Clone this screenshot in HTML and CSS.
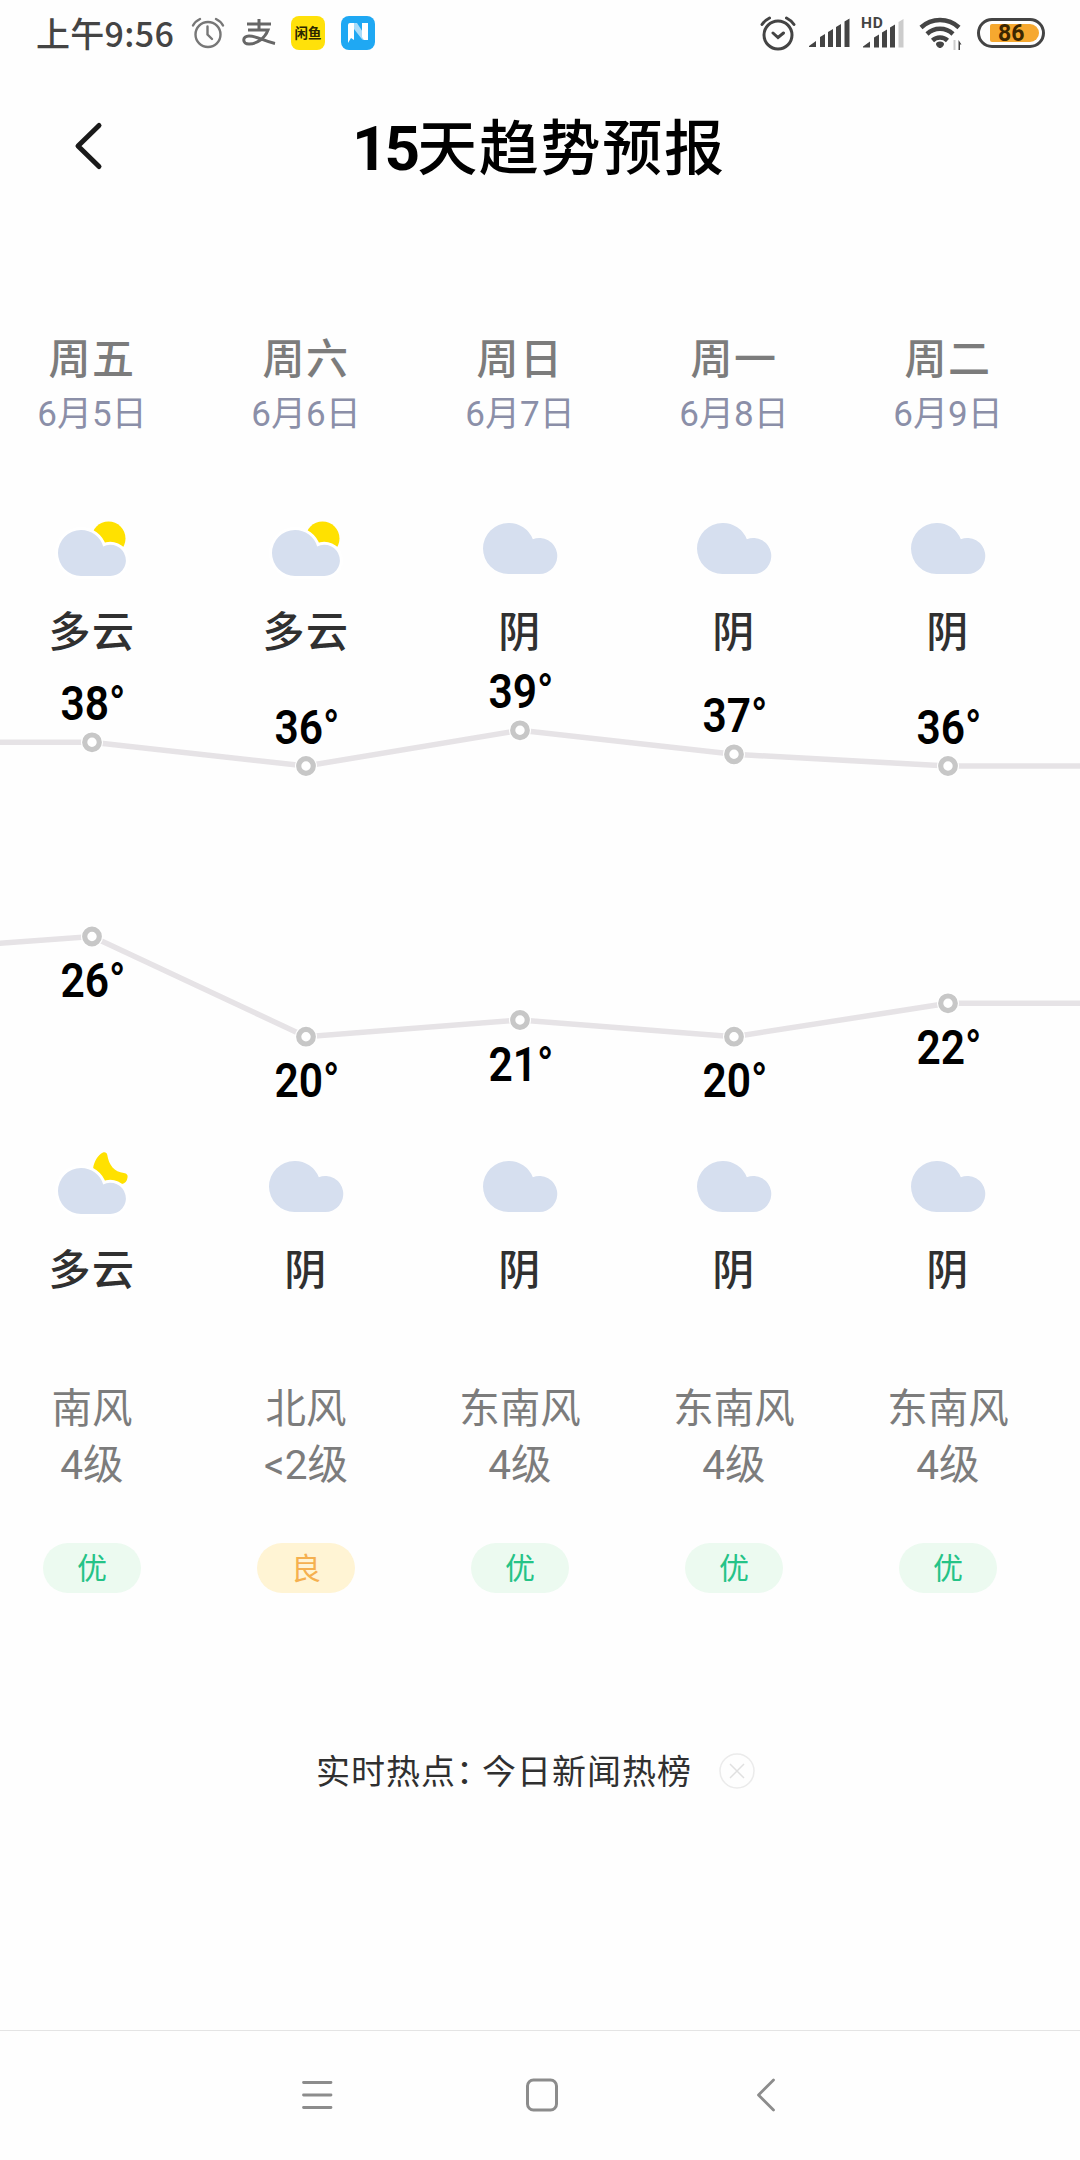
FILE: index.html
```html
<!DOCTYPE html>
<html lang="zh-CN">
<head>
    <meta charset="UTF-8">
    <meta name="viewport" content="width=device-width, initial-scale=1.0">
    <title>15天趋势预报</title>
    <link rel="stylesheet" href="styles.css">
</head>
<body>

    <!-- Shared weather icons -->
    <svg class="symbols" width="0" height="0">
        <symbol id="cloud" viewBox="0 0 80 80">
            <path fill="#d6dfef" d="M28.5 13a25.5 25.5 0 0 1 24.3 16.2A18 18 0 1 1 59 64H28.5a25.5 25.5 0 0 1 0-51z"/>
        </symbol>
        <symbol id="cloudy-day" viewBox="0 0 80 80">
            <circle cx="56.5" cy="28.5" r="17" fill="#ffe100"/>
            <path fill="#d6dfef" stroke="#fff" stroke-width="6" paint-order="stroke" d="M29 20a23 23 0 0 1 22.2 16.5A15.6 15.6 0 1 1 58 66H29a23 23 0 0 1 0-46z"/>
        </symbol>
        <symbol id="cloudy-night" viewBox="0 0 80 80">
            <path fill="#ffe100" d="M41 21c1-8 5-14 10-16.500 2-.8 4 .2 4.300 2.500 1.500 10 7 17 16.500 18 3 .2 4.500 2.500 3.600 5C75 33 73 35.500 70 36L52 40z"/>
            <path fill="#d6dfef" stroke="#fff" stroke-width="6" paint-order="stroke" d="M29 20a23 23 0 0 1 22.200 16.500A15.600 15.600 0 1 1 58 66H29a23 23 0 0 1 0-46z"/>
        </symbol>
    </svg>

    <div class="status-bar">
        <div class="status-left">
            <span class="time">上午9:56</span>
            <svg class="ic-clock" width="34" height="34" viewBox="0 0 34 34" fill="none" stroke="#777" stroke-width="2.400" stroke-linecap="round">
                <circle cx="17" cy="18.500" r="12.500"/>
                <path d="M16.500 10.500v8l4.500 4.500M2 9.500c1.500-3 4-5 7-6.500M32 9.500c-1.500-3-4-5-7-6.500"/>
            </svg>
            <svg class="ic-pay" width="34" height="28" viewBox="0 0 34 28" fill="none" stroke="#666" stroke-width="3">
                <path d="M5 5h24M17 0v11M6 11h20C23 19 15 25 7 25c-7 0-7-8 0-8 8 0 14 5 26 7.500"/>
            </svg>
            <span class="app-yellow">闲鱼</span>
            <svg class="ic-n" width="34" height="34" viewBox="0 0 34 34">
                <rect width="34" height="34" rx="8" fill="#1fa8f3"/>
                <path d="M7 9q0-2 2-2h4v17l-3-2-3 5z" fill="#fff"/>
                <path d="M13 7h3l11 17h-4q-2 0-3-2l-7-9z" fill="#a9dcfa"/>
                <path d="M21 7h6v17h-4l-2-3z" fill="#fff"/>
            </svg>
        </div>
        <div class="status-right">
            <svg class="ic-alarm" width="36" height="36" viewBox="0 0 36 36" fill="none" stroke="#444" stroke-width="3" stroke-linecap="round">
                <circle cx="18" cy="20" r="14"/>
                <path d="M13 18l5 4.500 5.500-4.500M2 9.500C4 6.500 6.500 4.500 9.500 3M34 9.500C32 6.500 29.500 4.500 26.500 3"/>
            </svg>
            <svg class="ic-signal" width="41" height="30" viewBox="0 0 41 30" fill="#444">
                <path d="M0 29v-1l7-5v6zM11 29V19l5-3v13zM19 29V14l5-3v18zM27 29V9l5-3v23zM35.500 29V3.500l5-3V29z"/>
            </svg>
            <svg class="ic-hd" width="41" height="34" viewBox="0 0 41 34" fill="#444">
                <text x="-2" y="12" font-size="15.500" font-weight="700" letter-spacing="0.800">HD</text>
                <path d="M0 31.500v-1l7-5v6zM11 31.500V21.500l5-3v13zM19 31.500V16.500l5-3v18zM27 31.500V11.500l5-3v23z"/>
                <path fill="#ccc" d="M35.500 31.500V6l5-3v28.500z"/>
            </svg>
            <svg class="ic-wifi" width="44" height="36" viewBox="0 0 44 36" fill="none" stroke="#444" stroke-width="4.500">
                <path d="M2 12.500a28 28 0 0 1 38 0M8 19a19 19 0 0 1 26 0M13.500 25.500a11 11 0 0 1 15 0"/>
                <path d="M21 26.500c2.500 0 4 1 4 2.500s-2 4-4 4-4-2.500-4-4 1.500-2.500 4-2.500z" fill="#444" stroke="none"/>
                <path d="M35.500 25v10" stroke="#ccc" stroke-width="2"/>
                <path d="M39.500 35V25l3 4.500h-1.500v5.500z" fill="#444" stroke="none"/>
            </svg>
            <div class="battery"><span class="battery-fill">86</span></div>
        </div>
    </div>

    <div class="header">
        <svg class="back" width="30" height="50" viewBox="0 0 30 50" fill="none" stroke="#1a1a1a" stroke-width="5" stroke-linecap="round" stroke-linejoin="round">
            <path d="M26 4.500L5 25l21 20.500"/>
        </svg>
        <h1><span class="num">15</span>天趋势预报</h1>
    </div>

    <div class="forecast">
        <div class="row">
            <div class="day"><p class="week">周五</p><p class="date">6月5日</p></div>
            <div class="day"><p class="week">周六</p><p class="date">6月6日</p></div>
            <div class="day"><p class="week">周日</p><p class="date">6月7日</p></div>
            <div class="day"><p class="week">周一</p><p class="date">6月8日</p></div>
            <div class="day"><p class="week">周二</p><p class="date">6月9日</p></div>
        </div>

        <div class="row weather-row">
            <div class="day"><svg class="icon"><use href="#cloudy-day"/></svg><p class="weather">多云</p></div>
            <div class="day"><svg class="icon"><use href="#cloudy-day"/></svg><p class="weather">多云</p></div>
            <div class="day"><svg class="icon"><use href="#cloud"/></svg><p class="weather">阴</p></div>
            <div class="day"><svg class="icon"><use href="#cloud"/></svg><p class="weather">阴</p></div>
            <div class="day"><svg class="icon"><use href="#cloud"/></svg><p class="weather">阴</p></div>
        </div>

        <svg class="chart" width="1080" height="485" viewBox="0 663 1080 485">
            <polyline class="line" points="-10,742.300 92,742.300 306,766 520,730.300 734,754.300 948,766 1090,766"/>
            <polyline class="line" points="-10,944 92,936.500 306,1036.700 520,1020 734,1036.700 948,1003.300 1090,1003.300"/>
            <g class="dots">
                <circle cx="92" cy="742.300" r="11"/><circle class="ring" cx="92" cy="742.300" r="7.300"/>
                <circle cx="306" cy="766" r="11"/><circle class="ring" cx="306" cy="766" r="7.300"/>
                <circle cx="520" cy="730.300" r="11"/><circle class="ring" cx="520" cy="730.300" r="7.300"/>
                <circle cx="734" cy="754.300" r="11"/><circle class="ring" cx="734" cy="754.300" r="7.300"/>
                <circle cx="948" cy="766" r="11"/><circle class="ring" cx="948" cy="766" r="7.300"/>
                <circle cx="92" cy="936.500" r="11"/><circle class="ring" cx="92" cy="936.500" r="7.300"/>
                <circle cx="306" cy="1036.700" r="11"/><circle class="ring" cx="306" cy="1036.700" r="7.300"/>
                <circle cx="520" cy="1020" r="11"/><circle class="ring" cx="520" cy="1020" r="7.300"/>
                <circle cx="734" cy="1036.700" r="11"/><circle class="ring" cx="734" cy="1036.700" r="7.300"/>
                <circle cx="948" cy="1003.300" r="11"/><circle class="ring" cx="948" cy="1003.300" r="7.300"/>
            </g>
            <g class="temps">
                <text x="93" y="720" textLength="65" lengthAdjust="spacingAndGlyphs">38°</text>
                <text x="307" y="744" textLength="65" lengthAdjust="spacingAndGlyphs">36°</text>
                <text x="521" y="708" textLength="65" lengthAdjust="spacingAndGlyphs">39°</text>
                <text x="735" y="732" textLength="65" lengthAdjust="spacingAndGlyphs">37°</text>
                <text x="949" y="744" textLength="65" lengthAdjust="spacingAndGlyphs">36°</text>
                <text x="93" y="997" textLength="65" lengthAdjust="spacingAndGlyphs">26°</text>
                <text x="307" y="1097" textLength="65" lengthAdjust="spacingAndGlyphs">20°</text>
                <text x="521" y="1080.500" textLength="65" lengthAdjust="spacingAndGlyphs">21°</text>
                <text x="735" y="1097" textLength="65" lengthAdjust="spacingAndGlyphs">20°</text>
                <text x="949" y="1064" textLength="65" lengthAdjust="spacingAndGlyphs">22°</text>
            </g>
        </svg>

        <div class="row">
            <div class="day"><svg class="icon"><use href="#cloudy-night"/></svg><p class="weather">多云</p></div>
            <div class="day"><svg class="icon"><use href="#cloud"/></svg><p class="weather">阴</p></div>
            <div class="day"><svg class="icon"><use href="#cloud"/></svg><p class="weather">阴</p></div>
            <div class="day"><svg class="icon"><use href="#cloud"/></svg><p class="weather">阴</p></div>
            <div class="day"><svg class="icon"><use href="#cloud"/></svg><p class="weather">阴</p></div>
        </div>

        <div class="row wind-row">
            <div class="day"><p class="wind">南风<br>4级</p><span class="air good">优</span></div>
            <div class="day"><p class="wind">北风<br>&lt;2级</p><span class="air fair">良</span></div>
            <div class="day"><p class="wind">东南风<br>4级</p><span class="air good">优</span></div>
            <div class="day"><p class="wind">东南风<br>4级</p><span class="air good">优</span></div>
            <div class="day"><p class="wind">东南风<br>4级</p><span class="air good">优</span></div>
        </div>
    </div>

    <div class="hot-news">
        <p>实时热点<span class="colon">：</span>今日新闻热榜</p>
        <svg width="36" height="36" viewBox="0 0 36 36" fill="none" stroke="#ebebeb" stroke-width="1.500">
            <circle cx="18" cy="18" r="17"/>
            <path d="M11 11l14 14M25 11L11 25" stroke="#e0e0e0"/>
        </svg>
    </div>

    <div class="nav-bar">
        <svg width="34" height="34" viewBox="0 0 34 34" fill="none" stroke="#8c8c8c" stroke-width="2.800" stroke-linecap="round">
            <path d="M3.500 4.500h27.500M3.500 17h27.500M3.500 29.500h27.500"/>
        </svg>
        <svg width="34" height="34" viewBox="0 0 34 34" fill="none" stroke="#8c8c8c" stroke-width="3">
            <rect x="2.500" y="2" width="29" height="30" rx="6"/>
        </svg>
        <svg width="34" height="34" viewBox="0 0 34 34" fill="none" stroke="#8c8c8c" stroke-width="2.800" stroke-linecap="round" stroke-linejoin="round">
            <path d="M24.500 2L9.500 17l15 15"/>
        </svg>
    </div>

</body>
</html>
```

FILE: styles.css
```css
body {
    margin: 0;
    width: 1080px;
    height: 2160px;
    display: flex;
    flex-direction: column;
    overflow: hidden;
    background-color: #fefefe;
    color: #303030;
    font-family: Roboto, "Noto Sans CJK SC", sans-serif;
}

h1,
p {
    margin: 0;
}

.symbols {
    position: absolute;
}

/* Status bar */
.status-bar {
    display: flex;
    justify-content: space-between;
    align-items: center;
    height: 66px;
    padding: 0 35px 0 36px;
    box-sizing: border-box;
    color: #444;
}

.status-left,
.status-right {
    display: flex;
    align-items: center;
}

.time {
    font-family: "Noto Sans CJK SC", sans-serif;
    font-size: 34px;
    font-weight: 500;
    letter-spacing: 0.3px;
    line-height: 66px;
}

.ic-clock {
    margin-left: 17px;
}

.ic-pay {
    margin-left: 17px;
}

.app-yellow {
    width: 34px;
    height: 34px;
    margin-left: 15px;
    border-radius: 8px;
    background-color: #ffe10a;
    color: #2b2600;
    font-size: 13.5px;
    font-weight: 700;
    line-height: 34px;
    text-align: center;
    white-space: nowrap;
}

.ic-n {
    margin-left: 16px;
}

.ic-alarm {
    margin-right: 1px;
}

.ic-signal {
    margin-left: 12px;
}

.ic-hd {
    margin-left: 13px;
    overflow: visible;
}

.ic-wifi {
    margin-left: 15px;
}

.battery {
    width: 68px;
    height: 30px;
    margin-left: 14px;
    padding: 3px 3px 3px 10px;
    box-sizing: border-box;
    border: 3px solid #444;
    border-radius: 15px;
}

.battery-fill {
    display: block;
    height: 18px;
    border-radius: 2px 9px 9px 2px;
    background-color: #f6a82f;
    color: #3d2600;
    font-size: 23px;
    font-weight: 700;
    line-height: 19px;
    padding-left: 8px;
}

/* Title */
.header {
    display: flex;
    align-items: center;
    height: 160px;
    padding-left: 73px;
}

.header h1 {
    margin-left: 249px;
    color: #000;
    font-family: "Noto Sans CJK SC", sans-serif;
    font-size: 60px;
    font-weight: 500;
    letter-spacing: 1.7px;
    line-height: 80px;
}

.header .num {
    font-family: Roboto, sans-serif;
    font-size: 62px;
    font-weight: 700;
    letter-spacing: -3px;
}

/* Forecast */
.forecast {
    padding-top: 104px;
}

.row {
    display: grid;
    grid-template-columns: repeat(5, 214px);
    margin-left: -15px;
}

.day {
    display: flex;
    flex-direction: column;
    align-items: center;
    text-align: center;
}

.week {
    color: #7c7c7c;
    font-size: 42px;
    font-weight: 500;
    letter-spacing: 1.5px;
    line-height: 60px;
}

.date {
    color: #8b8fa8;
    font-size: 35px;
    line-height: 50px;
}

.weather-row {
    margin-top: 70px;
}

.icon {
    width: 80px;
    height: 80px;
}

.weather {
    margin-top: 13px;
    font-size: 42px;
    font-weight: 500;
    letter-spacing: 1.5px;
    line-height: 60px;
}

.chart {
    display: block;
    overflow: visible;
}

.line {
    fill: none;
    stroke: #e6e3e6;
    stroke-width: 5.5;
}

.dots circle {
    fill: #fff;
}

.dots .ring {
    stroke: #c7c7c7;
    stroke-width: 5.2;
}

.temps {
    fill: #000;
    font-size: 48px;
    font-weight: 600;
    text-anchor: middle;
}

.wind-row {
    margin-top: 80px;
}

.wind {
    color: #7c7c7c;
    font-size: 40.5px;
    line-height: 56px;
}

.air {
    width: 98px;
    height: 50px;
    margin-top: 50px;
    border-radius: 25px;
    font-size: 30px;
    line-height: 52px;
}

.good {
    background-color: #ecfaf0;
    color: #25c387;
}

.fair {
    background-color: #fff4d4;
    color: #f5b04f;
}

/* Hot news */
.hot-news {
    display: flex;
    align-items: center;
    margin: 152px 0 0 316px;
}

.hot-news p {
    width: 403px;
    font-size: 34px;
    letter-spacing: 1px;
    line-height: 50px;
    padding-top: 4px;
    margin-top: -2px;
}

.colon {
    letter-spacing: -8px;
}

/* System navigation */
.nav-bar {
    display: flex;
    align-items: center;
    justify-content: space-between;
    height: 127px;
    margin-top: auto;
    padding: 0 297px 2px 300px;
    border-top: 1px solid #e4e4e4;
}
```
